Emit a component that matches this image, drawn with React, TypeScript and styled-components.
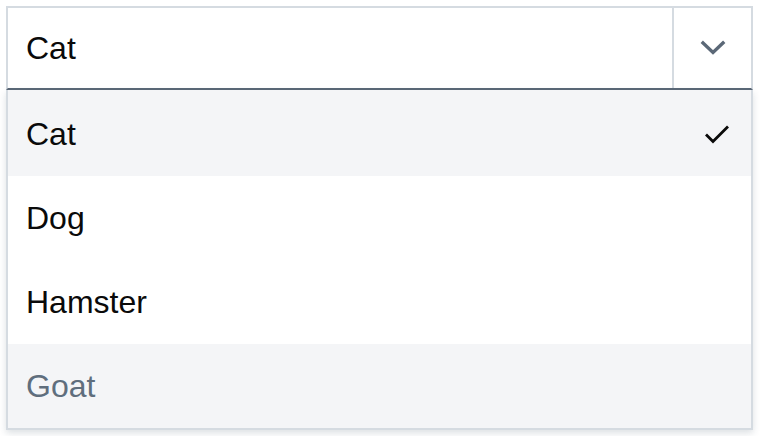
import React from "react";
import styled, { createGlobalStyle } from "styled-components";

const Global = createGlobalStyle`
  html, body { margin: 0; padding: 0; background: #ffffff; }
  body { font-family: "Liberation Sans", Arial, Helvetica, sans-serif; }
`;

const Page = styled.div`
  padding: 6px;
  width: 747px;
`;

const Wrapper = styled.div`
  display: flex;
  flex-direction: column;
`;

const Trigger = styled.div`
  display: flex;
  height: 84px;
  box-sizing: border-box;
  border: 2px solid #d5dbe1;
  border-bottom: 2px solid #5b6877;
  background: #ffffff;
`;

const Value = styled.div`
  flex: 1;
  display: flex;
  align-items: center;
  padding-left: 18px;
  font-size: 32px;
  color: #0a0a0a;
`;

const Toggle = styled.div`
  width: 77px;
  border-left: 2px solid #d5dbe1;
  display: flex;
  align-items: center;
  justify-content: center;
`;

const Menu = styled.div`
  display: flex;
  flex-direction: column;
  padding-top: 2px;
  background: #f4f5f7;
  border: 2px solid #d5dbe1;
  border-top: none;
  box-shadow: 0 3px 7px rgba(40, 60, 80, 0.16);
`;

const Option = styled.div<{ $active?: boolean; $disabled?: boolean }>`
  height: 84px;
  display: flex;
  align-items: center;
  justify-content: space-between;
  padding: 0 20px 0 18px;
  font-size: 32px;
  background: ${(p) => (p.$active || p.$disabled ? "#f4f5f7" : "#ffffff")};
  color: ${(p) => (p.$disabled ? "#5f6e7d" : "#0a0a0a")};
`;

const Chevron = () => (
  <svg width="26" height="16" viewBox="0 0 26 16">
    <path d="M3 3 L13 12.5 L23 3" fill="none" stroke="#5b6877" strokeWidth="3.4" strokeLinecap="square" />
  </svg>
);

const Check = () => (
  <svg width="28" height="24" viewBox="0 0 28 24">
    <path d="M3 12.5 L10 19.5 L25 4.5" fill="none" stroke="#0a0a0a" strokeWidth="2.8" />
  </svg>
);

export default function App() {
  return (
    <Page>
      <Global />
      <Wrapper>
        <Trigger>
          <Value>Cat</Value>
          <Toggle>
            <Chevron />
          </Toggle>
        </Trigger>
        <Menu>
          <Option $active>
            Cat
            <Check />
          </Option>
          <Option>Dog</Option>
          <Option>Hamster</Option>
          <Option $disabled>Goat</Option>
        </Menu>
      </Wrapper>
    </Page>
  );
}
